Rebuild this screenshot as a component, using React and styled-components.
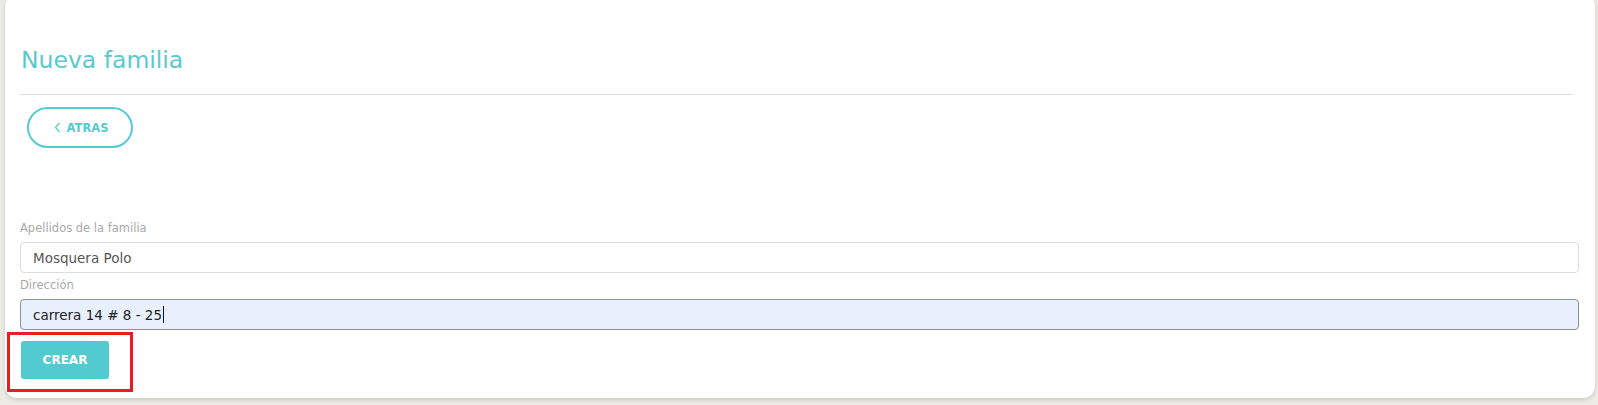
import React from "react";
import styled, { createGlobalStyle } from "styled-components";

const GlobalStyle = createGlobalStyle`
  html, body {
    margin: 0;
    padding: 0;
    background: #ecebe6;
  }
  body {
    font-family: "DejaVu Sans", "Noto Sans", sans-serif;
  }
`;

const Page = styled.div`
  padding: 0 3px 0 5px;
  height: 405px;
  box-sizing: border-box;
`;

const Card = styled.section`
  position: relative;
  top: -6px;
  background: #fff;
  border-radius: 12px;
  box-shadow: 0 2px 4px rgba(0, 0, 0, 0.14);
  height: 404px;
  box-sizing: border-box;
  padding: 50px 16px 0 15px;
`;

const Title = styled.h2`
  margin: 0 0 0 1px;
  font-size: 23.5px;
  line-height: 32px;
  font-weight: 400;
  color: #58c9d0;
`;

const Divider = styled.hr`
  margin: 18px 6px 0 0;
  border: 0;
  border-top: 1px solid #e0dee6;
`;

const BackButton = styled.button`
  display: flex;
  align-items: center;
  justify-content: center;
  gap: 6px;
  margin: 12px 0 0 7px;
  width: 106px;
  height: 41px;
  box-sizing: border-box;
  border: 2px solid #54cbd1;
  border-radius: 21px;
  background: #fff;
  color: #54cbd1;
  font-family: inherit;
  font-size: 11.5px;
  font-weight: 700;
  padding: 0 0 0 2px;
`;

const Form = styled.div`
  margin-top: 72px;
  display: flex;
  flex-direction: column;
`;

const Label = styled.label`
  font-size: 11.5px;
  line-height: 16px;
  color: #a9a9a9;
  margin-top: ${(p) => (p.$first ? "0" : "4px")};
  margin-bottom: 6px;
`;

const Field = styled.div`
  height: 31px;
  box-sizing: border-box;
  display: flex;
  align-items: center;
  padding-left: 12px;
  border-radius: 4px;
  font-size: 13.5px;
  border: 1px solid ${(p) => (p.$filled ? "#8f8f8f" : "#dcdcdc")};
  background: ${(p) => (p.$filled ? "#e8f0fe" : "#fff")};
  color: ${(p) => (p.$filled ? "#222" : "#555")};
`;

const Caret = styled.span`
  display: inline-block;
  width: 1px;
  height: 17px;
  background: #111;
  margin-left: 1px;
`;

const SubmitWrap = styled.div`
  position: relative;
  margin: 11px 0 0 1px;
  align-self: flex-start;
`;

const SubmitButton = styled.button`
  width: 88px;
  height: 38px;
  border: 0;
  border-radius: 3px;
  background: #52cbd0;
  color: #fff;
  font-family: inherit;
  font-size: 12px;
  font-weight: 700;
`;

const Highlight = styled.div`
  position: absolute;
  left: -14px;
  top: -9px;
  width: 126px;
  height: 60px;
  box-sizing: border-box;
  border: 3px solid #e31e25;
  pointer-events: none;
`;

const App = () => {
  return (
    <>
      <GlobalStyle />
      <Page>
        <Card>
          <Title>Nueva familia</Title>
          <Divider />
          <BackButton>
            <svg width="7" height="11" viewBox="0 0 7 11">
              <polyline
                points="5.5,1 1.5,5.5 5.5,10"
                fill="none"
                stroke="#54cbd1"
                strokeWidth="1.2"
              />
            </svg>
            ATRAS
          </BackButton>
          <Form>
            <Label $first>Apellidos de la familia</Label>
            <Field>Mosquera Polo</Field>
            <Label>Dirección</Label>
            <Field $filled>
              carrera 14 # 8 - 25
              <Caret />
            </Field>
            <SubmitWrap>
              <SubmitButton>CREAR</SubmitButton>
              <Highlight />
            </SubmitWrap>
          </Form>
        </Card>
      </Page>
    </>
  );
};

export default App;
